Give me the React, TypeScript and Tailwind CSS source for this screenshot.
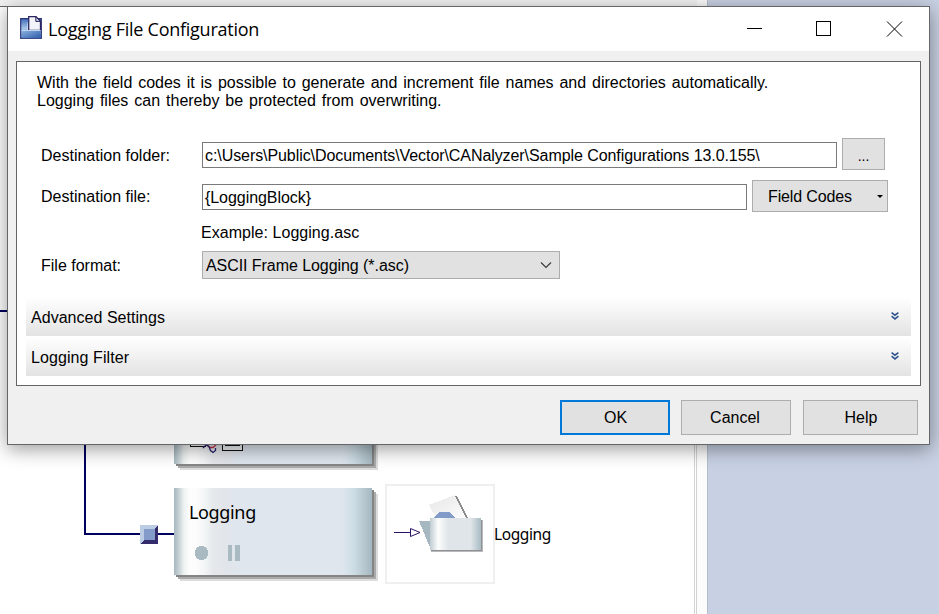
import React from "react";

const label = "relative top-px w-[160px] text-black";

function AppIcon() {
  return (
    <svg width="22" height="24" viewBox="0 0 22 24">
      <defs>
        <linearGradient id="ic" x1="0" y1="0" x2="1" y2="1">
          <stop offset="0" stopColor="#8fb4e0" />
          <stop offset="1" stopColor="#2f5dad" />
        </linearGradient>
        <linearGradient id="back" x1="0" y1="0" x2="0" y2="1">
          <stop offset="0" stopColor="#3f6cb8" />
          <stop offset=".5" stopColor="#a5c5e8" />
          <stop offset="1" stopColor="#5585c8" />
        </linearGradient>
      </defs>
      <path d="M.7 2.700H21.300V22.300H.7z" fill="url(#back)" stroke="#2c3474" strokeWidth="1.200" />
      <path d="M7.500 6.500H10V14.500H7.500z" fill="#e4ecf7" />
      <path d="M8.700 14.500V.7H16L20.500 5.200V14.500z" fill="#f3f4fa" stroke="#2c2760" strokeWidth="1.300" />
      <path d="M15.800 .8V5.400H20.500z" fill="#c8cde0" stroke="#2c2760" />
      <path d="M1.500 14H20.800V21.800H1.500z" fill="url(#ic)" />
      <path d="M1.500 14.500H20.500" stroke="#bdd3ee" />
      <path d="M.5 22.500H21.500" stroke="#3c4a8c" />
    </svg>
  );
}

function Chevrons() {
  return (
    <svg width="8" height="8" viewBox="0 0 8 8" fill="none" stroke="#30548f" strokeWidth="1.6">
      <path d="M.6.7 4 3.200 7.400.7M.6 4.200 4 6.900 7.400 4.200" />
    </svg>
  );
}

function Section({ title, spacing }: { title: string; spacing: string }) {
  return (
    <div className="flex h-[39px] items-center justify-between bg-linear-to-b from-white to-[#e3e3e3] pr-[12px] pl-[5px]">
      <span className={"pt-[2px] " + spacing}>{title}</span>
      <span className="pb-[2px]"><Chevrons /></span>
    </div>
  );
}

function Diagram() {
  return (
    <svg className="absolute inset-0" width="939" height="614" shapeRendering="crispEdges">
      <defs>
        <linearGradient id="block">
          <stop offset="0" stopColor="#a5b7be" />
          <stop offset=".025" stopColor="#c6d1d5" />
          <stop offset=".05" stopColor="#eef2f2" />
          <stop offset=".08" stopColor="#fdfdfd" />
          <stop offset=".11" stopColor="#fdfdfd" />
          <stop offset=".16" stopColor="#f1f4f5" />
          <stop offset=".2" stopColor="#e5e8eb" />
          <stop offset=".26" stopColor="#e2e5ea" />
          <stop offset=".33" stopColor="#dfe6ee" />
          <stop offset=".85" stopColor="#dfe6ee" />
          <stop offset=".91" stopColor="#ccdce4" />
          <stop offset="1" stopColor="#a5b7c0" />
        </linearGradient>
        <linearGradient id="folder">
          <stop offset="0" stopColor="#c0ccd1" />
          <stop offset=".16" stopColor="#fcfdfd" />
          <stop offset=".36" stopColor="#dfe5e8" />
          <stop offset=".8" stopColor="#dfe5e8" />
          <stop offset="1" stopColor="#a9bbc4" />
        </linearGradient>
        <linearGradient id="paper" x1="0" y1="0" x2="1" y2="1">
          <stop offset="0" stopColor="#e6e6e6" />
          <stop offset="1" stopColor="#fcfcfc" />
        </linearGradient>
      </defs>
      <path d="M694.5 7V614M696.5 7V614" stroke="#d2d2d2" />
      <rect x="0" y="6" width="697" height="1" fill="#686868" />
      <rect x="0" y="310" width="8" height="2" fill="#00005f" />
      <path d="M85 440V534H174" fill="none" stroke="#00005f" strokeWidth="2" />
      <path d="M140 525h18v19h-18z" fill="#bccce5" />
      <path d="M158 525v19h-18l4-4h11V529z" fill="#342c6c" />
      <path d="M144 529h11v11h-11z" fill="#829bc8" />

      <rect x="180" y="440" width="198" height="30" fill="#dcdcdc" />
      <rect x="178" y="440" width="198" height="28" fill="#aaa" />
      <rect x="176" y="440" width="198" height="26" fill="#858585" />
      <rect x="174" y="440" width="198" height="24" fill="url(#block)" />
      <path d="M190.500 440v6.500h15" fill="none" stroke="#111" />
      <g shapeRendering="auto" fill="none" strokeWidth="1.3">
        <path d="M207 445l3 2.500h3l3-2.500" stroke="#c62a45" />
        <path d="M203 448l3-3 3 1.500 1.500 4 2.500 2 2.500-2v-2.500" stroke="#292270" />
      </g>
      <path d="M222.500 440v10.500h20V440M225 445.500h15" fill="#eef2f4" stroke="#111" />

      <rect x="180" y="494" width="198" height="87" fill="#dcdcdc" />
      <rect x="178" y="492" width="198" height="87" fill="#aaa" />
      <rect x="176" y="490" width="198" height="87" fill="#858585" />
      <rect x="174" y="488" width="198" height="87" fill="url(#block)" />
      <circle cx="201.500" cy="553" r="7" fill="#a9bac2" />
      <path d="M228 545h4v16h-4zM235 545h5v16h-5z" fill="#a9bac2" />

      <rect x="386" y="485" width="108" height="98" fill="#fff" stroke="#efefef" strokeWidth="2" />
      <path d="M394 532.500H410M410.500 528.500V536.500L420 532.500z" fill="#fff" stroke="#281266" shapeRendering="auto" />
      <path d="M429 505 455 495 466 518H436z" fill="url(#paper)" />
      <path d="M456 496 467 518" stroke="#8a8a8a" strokeWidth="1.600" />
      <path d="M434 518 439 512H450L455 518z" fill="#829bc8" />
      <path d="M419 521H431V550z" fill="#a5b7c0" />
      <rect x="431" y="520" width="52" height="32" fill="#b9b9bc" />
      <rect x="431" y="520" width="51" height="31" fill="#8f9195" />
      <rect x="430" y="518" width="51" height="32" rx="1" fill="url(#folder)" />
    </svg>
  );
}

export default function App() {
  return (
    <div className="relative h-[614px] w-[939px] overflow-hidden bg-white font-['Liberation_Sans',Arial,sans-serif] text-[16px] leading-[18px] text-black">
      <div className="flex h-full">
        <div className="w-[697px]"><div className="h-[6px] bg-[#f3f3f3]" /></div>
        <div className="w-[10px] bg-[#fcfcfc]" />
        <div className="flex-1 border-l border-[#b5bdcc] bg-[#c8d1e3]" />
      </div>
      <Diagram />
      <span className="absolute top-[500px] left-[189px] font-['Noto_Sans',sans-serif] text-[18px] leading-[24px] tracking-[-0.35px]">Logging</span>
      <span className="absolute top-[523px] left-[494px] font-['Noto_Sans',sans-serif] text-[15.500px] leading-[22px] tracking-[-0.4px]">Logging</span>

      <div className="absolute top-[6px] left-[7px] h-[439px] w-[923px] border border-[#65666a] bg-[#f0f0f0] shadow-[0_4px_18px_rgba(0,0,0,0.4)]">
        <header className="flex h-[44px] items-center bg-white pl-[12px]">
          <span className="-mt-[2px]"><AppIcon /></span>
          <h1 className="ml-[6px] flex-1 font-['Open_Sans',sans-serif] text-[18px] leading-[24px] tracking-[-0.26px]">Logging File Configuration</h1>
          <svg width="156" height="16" viewBox="0 0 156 16" className="mr-[26px]" fill="none" stroke="#000" shapeRendering="crispEdges">
            <path d="M0 7.500H15M69.500.5H83.500V14.500H69.500z" />
            <path d="M140 .5 155 15.500M155 .5 140 15.500" shapeRendering="auto" />
          </svg>
        </header>

        <main className="mx-[8px] mt-[10px] h-[325px] w-[905px] border border-[#646464] bg-white pt-[12px]">
          <p className="pl-[20px] whitespace-nowrap">
            <span className="[word-spacing:1.4px]">With the field codes it is possible to generate and increment file names and directories automatically.</span><br />
            <span className="[word-spacing:1.5px]">Logging files can thereby be protected from overwriting.</span>
          </p>
          <div className="mt-[28px] flex h-[32px] items-center pl-[24px]">
            <span className={label + " pt-[2px]"}>Destination folder:</span>
            <div className="mt-[2px] ml-px flex h-[26px] w-[635px] items-center border border-[#7a7a7a] pt-px pl-[2px] tracking-[-0.075px] whitespace-pre">c:\Users\Public\Documents\Vector\CANalyzer\Sample Configurations 13.0.155\</div>
            <button className="ml-[5px] h-[32px] w-[43px] border border-[#adadad] bg-[#e1e1e1] pt-[3px] text-[14px]">...</button>
          </div>
          <div className="mt-[10px] flex h-[32px] items-center pl-[24px]">
            <span className={label}>Destination file:</span>
            <div className="mt-[2px] ml-px flex h-[26px] w-[545px] items-center border border-[#7a7a7a] pt-px pl-[2px] tracking-[-0.06px]">{"{LoggingBlock}"}</div>
            <button className="ml-[5px] flex h-[32px] w-[136px] items-center border border-[#adadad] bg-[#e1e1e1] pl-[15px]">
              <span className="flex-1 pt-[2px] text-left tracking-[-0.13px]">Field Codes</span>
              <svg width="6" height="3" className="mr-[4px]"><path d="M0 0H6L3 3z" /></svg>
            </button>
          </div>
          <p className="mt-[12px] pl-[184px] tracking-[0.04px]">Example: Logging.asc</p>
          <div className="mt-[9px] flex h-[28px] items-center pl-[24px]">
            <span className={label}>File format:</span>
            <div className="ml-px flex h-[28px] w-[358px] items-center justify-between border border-[#adadad] bg-[#e1e1e1] pr-[7px] pl-[3px]">
              <span className="pt-[2px] tracking-[-0.06px]">ASCII Frame Logging (*.asc)</span>
              <svg width="12" height="8" fill="none" stroke="#3c3c3c" strokeWidth="1.200"><path d="M1 1.500 6 6.500 11 1.500" /></svg>
            </div>
          </div>
          <div className="mt-[18px] mr-[9px] ml-[9px] flex flex-col gap-px">
            <Section title="Advanced Settings" spacing="tracking-[0.03px]" />
            <Section title="Logging Filter" spacing="tracking-[0.08px]" />
          </div>
        </main>

        <footer className="mt-[14px] flex h-[35px] justify-end pr-[11px]">
          <button className="mr-[11px] w-[110px] border-2 border-[#0078d7] bg-[#e1e1e1] pl-px">OK</button>
          <button className="mr-[12px] w-[110px] border border-[#adadad] bg-[#e1e1e1] pr-[2px]">Cancel</button>
          <button className="w-[115px] border border-[#adadad] bg-[#e1e1e1] pl-px">Help</button>
        </footer>
      </div>
    </div>
  );
}
